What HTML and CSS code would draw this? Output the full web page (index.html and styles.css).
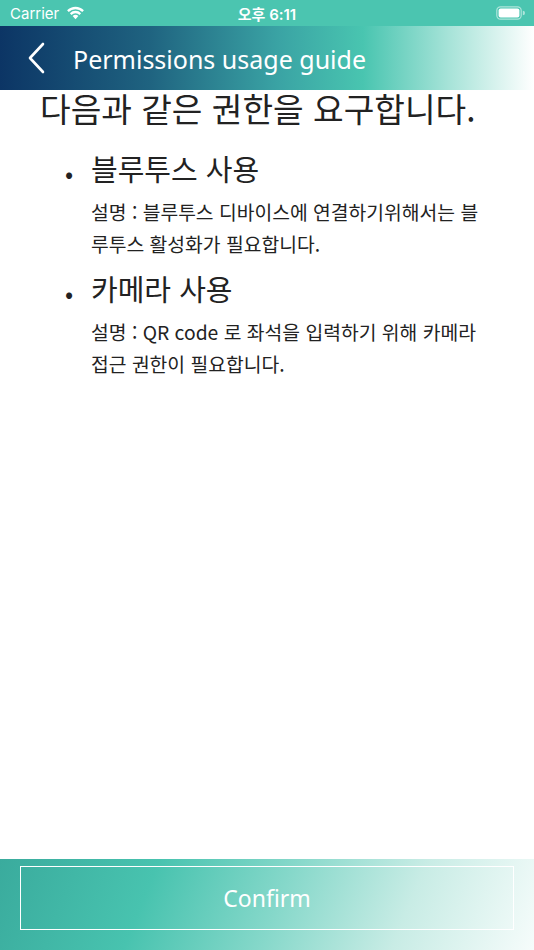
FILE: index.html
```html
<!DOCTYPE html>
<html lang="ko">
<head>
<meta charset="utf-8">
<title>Permissions usage guide</title>
<link rel="stylesheet" href="styles.css">
</head>
<body>
<div class="screen">
  <div class="status">
    <div class="status-left">
      <span class="carrier">Carrier</span>
      <svg class="wifi" width="19" height="14" viewBox="0 0 19 14">
        <path d="M9.5 13.2 L6.6 10.1 A4.2 4.2 0 0 1 12.4 10.1 Z" fill="#fff"/>
        <path d="M3.9 7.2 A7.9 7.9 0 0 1 15.1 7.2 L13.5 8.9 A5.6 5.6 0 0 0 5.5 8.9 Z" fill="#fff"/>
        <path d="M1.1 4.3 A11.8 11.8 0 0 1 17.9 4.3 L16.3 6 A9.5 9.5 0 0 0 2.7 6 Z" fill="#fff"/>
      </svg>
    </div>
    <div class="status-time">오후 6:11</div>
    <div class="status-right">
      <svg width="29" height="14" viewBox="0 0 29 14">
        <rect x="0.8" y="0.8" width="24.4" height="12.4" rx="3.6" fill="none" stroke="rgba(255,255,255,0.55)" stroke-width="1.2"/>
        <rect x="2.6" y="2.6" width="20.8" height="8.8" rx="2" fill="#fff"/>
        <path d="M26.8 4.8 A2 2 0 0 1 26.8 9.2 Z" fill="rgba(255,255,255,0.55)"/>
      </svg>
    </div>
  </div>
  <div class="navbar">
    <svg class="back" width="20" height="32" viewBox="0 0 20 32">
      <path d="M16 2 L3 16 L16 30" fill="none" stroke="#fff" stroke-width="2.6" stroke-linecap="round" stroke-linejoin="round"/>
    </svg>
    <span class="nav-title">Permissions usage guide</span>
  </div>
  <main class="content">
    <h1 class="heading">다음과 같은 권한을 요구합니다.</h1>
    <div class="item">
      <div class="item-head"><span class="bullet">•</span><span class="item-title">블루투스 사용</span></div>
      <p class="desc">설명 : 블루투스 디바이스에 연결하기위해서는 블루투스 활성화가 필요합니다.</p>
    </div>
    <div class="item">
      <div class="item-head"><span class="bullet">•</span><span class="item-title">카메라 사용</span></div>
      <p class="desc">설명 : QR code 로 좌석을 입력하기 위해 카메라 접근 권한이 필요합니다.</p>
    </div>
  </main>
  <footer class="footer">
    <button class="confirm">Confirm</button>
  </footer>
</div>
</body>
</html>
```

FILE: styles.css
```css
* { box-sizing: border-box; }
html, body { margin: 0; padding: 0; background: #fff; }
.screen {
  width: 534px;
  height: 950px;
  display: flex;
  flex-direction: column;
  overflow: hidden;
  font-family: "Noto Sans CJK KR", "Noto Sans", sans-serif;
}
.status {
  height: 26px;
  background: #4bc5b0;
  display: flex;
  align-items: center;
  justify-content: space-between;
  padding: 0 9px 0 10px;
  color: #fff;
  position: relative;
}
.status-left { display: flex; align-items: center; gap: 7px; }
.carrier { font-family: "Inter", "Liberation Sans", sans-serif; font-size: 15px; }
.wifi { margin-top: -1px; }
.status-time {
  position: absolute;
  left: 0; right: 0;
  text-align: center;
  font-family: "Inter", "Noto Sans CJK KR", sans-serif;
  font-size: 15px;
  font-weight: 600;
  pointer-events: none;
}
.status-right { display: flex; align-items: center; }
.navbar {
  height: 64px;
  display: flex;
  align-items: center;
  padding-left: 27px;
  background: linear-gradient(90deg, #0c3565 0%, #1f6380 28%, #3aa3a4 52%, #49c5b0 68%, #a6e3d8 84%, #ffffff 100%);
}
.nav-title {
  margin-left: 26px;
  margin-top: 2px;
  color: #fff;
  font-family: "Noto Sans", sans-serif;
  font-size: 25px;
}
.content {
  flex: 1;
  padding: 0 0 0 40px;
  color: #222;
}
.heading {
  margin: -3px 0 0 0;
  font-size: 33.3px;
  font-weight: 400;
  line-height: 42px;
}
.item { margin-top: 18px; }
.item + .item { margin-top: 7px; }
.item-head { display: flex; align-items: center; height: 42px; }
.bullet { width: 51px; padding-left: 25px; font-size: 24px; margin-top: 8px; }
.item-title { font-size: 29px; font-weight: 400; }
.desc {
  margin: 7px 0 0 51px;
  width: 400px;
  font-size: 19.3px;
  line-height: 32px;
  word-break: break-all;
  color: #222;
}
.footer {
  height: 91px;
  padding: 7px 20px 20px 20px;
  background: linear-gradient(112deg, #3aab9d 0%, #48c3af 28%, #86d8ca 52%, #c8ece5 75%, #f6fcfb 100%);
}
.confirm {
  width: 100%;
  height: 64px;
  border: 1.5px solid #fff;
  background: transparent;
  color: #fff;
  font-family: "Noto Sans", sans-serif;
  font-size: 23px;
  padding: 0;
}
```
